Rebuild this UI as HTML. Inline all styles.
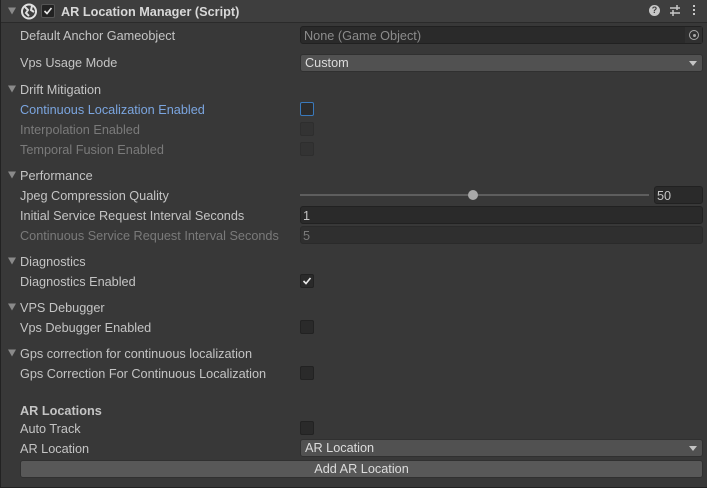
<!DOCTYPE html>
<html><head><style>
body{margin:0;width:707px;height:488px;background:#383838;font-family:"Liberation Sans",sans-serif;font-size:12.7px;color:#c4c4c4;position:relative;overflow:hidden}
.a{position:absolute;white-space:nowrap}
.l{left:20px;transform:translateY(-44%)}
.h{left:20px;transform:translateY(-44%)}
.tri{position:absolute;left:8px;width:0;height:0;border-left:4px solid transparent;border-right:4px solid transparent;border-top:7px solid #8a8a8a;transform:translateY(-50%)}
.dis{color:#7a7a7a}
.cb{position:absolute;left:300px;width:12px;height:12px;background:#2a2a2a;border:1px solid #222;border-radius:2px;transform:translateY(-50%)}
.cbd{background:#333;border-color:#2e2e2e}
.fld{position:absolute;left:300px;width:401px;height:17px;background:#2a2a2a;border:1px solid #212121;border-radius:3px;box-sizing:border-box}
.dd{position:absolute;left:300px;width:403px;height:18px;background:#515151;border:1px solid #303030;border-radius:3px;box-sizing:border-box;color:#dcdcdc;padding-left:4px;line-height:17px}
.dd:after{content:"";position:absolute;right:5px;top:6px;border-left:4px solid transparent;border-right:4px solid transparent;border-top:5px solid #c4c4c4}
</style></head><body>
<div class="a" style="left:0;top:0;width:707px;height:22px;background:#3e3e3e;border-bottom:1px solid #2a2a2a"></div>
<div class="a" style="left:0;top:0;width:1px;height:488px;background:#222"></div>
<div class="a" style="left:0;top:487px;width:707px;height:1px;background:#222"></div>
<div class="tri" style="top:11px"></div>
<svg class="a" style="left:20px;top:3px" width="18" height="17" viewBox="0 0 18 17"><circle cx="9" cy="8.5" r="7" fill="none" stroke="#e0e0e0" stroke-width="2"/><path d="M5 4 L8 7 L6 10 L9 13 M12 3 L11 7 L14 9" stroke="#e0e0e0" stroke-width="2" fill="none"/></svg>
<div class="a" style="left:41px;top:4px;width:12px;height:12px;background:#222;border:1px solid #555;border-radius:2px"></div>
<svg class="a" style="left:43px;top:6px" width="10" height="10"><path d="M1.5 5 L4 7.5 L8.5 2" stroke="#e8e8e8" stroke-width="1.6" fill="none"/></svg>
<div class="a" style="left:61px;top:11px;transform:translateY(-44%);font-weight:bold;color:#d8d8d8">AR Location Manager (Script)</div>
<div class="a" style="left:649px;top:5px;width:11px;height:11px;border-radius:50%;background:#c8c8c8;color:#3e3e3e;font-size:9px;font-weight:bold;text-align:center;line-height:11px">?</div>
<svg class="a" style="left:669px;top:4px" width="12" height="13"><path d="M1 4H11M1 9H11M8 1V6M4 6V12" stroke="#c8c8c8" stroke-width="1.5"/></svg>
<div class="a" style="left:693px;top:5px;width:2px;height:2px;background:#c8c8c8;box-shadow:0 4px #c8c8c8,0 8px #c8c8c8"></div>

<div class="a l" style="top:35px">Default Anchor Gameobject</div>
<div class="fld" style="top:26px;width:403px;height:18px"></div>
<div class="a" style="left:304px;top:35px;transform:translateY(-44%);color:#8c8c8c">None (Game Object)</div>
<div class="a" style="left:685px;top:27px;width:17px;height:16px;background:#303030"></div>
<div class="a" style="left:689px;top:30px;width:8px;height:8px;border:1.5px solid #aaa;border-radius:50%"></div>
<div class="a" style="left:692.5px;top:33.5px;width:3px;height:3px;background:#aaa;border-radius:50%"></div>

<div class="a l" style="top:62px">Vps Usage Mode</div>
<div class="dd" style="top:54px">Custom</div>

<div class="tri" style="top:89px"></div><div class="a h" style="top:89px">Drift Mitigation</div>
<div class="a l" style="top:109px;color:#7ba5df">Continuous Localization Enabled</div>
<div class="cb" style="top:109px;border-color:#3a79bb;background:#2c2c2c"></div>
<div class="a l dis" style="top:129px">Interpolation Enabled</div><div class="cb cbd" style="top:129px"></div>
<div class="a l dis" style="top:149px">Temporal Fusion Enabled</div><div class="cb cbd" style="top:149px"></div>

<div class="tri" style="top:175px"></div><div class="a h" style="top:175px">Performance</div>
<div class="a l" style="top:195px">Jpeg Compression Quality</div>
<div class="a" style="left:300px;top:194px;width:349px;height:2px;background:#5e5e5e"></div>
<div class="a" style="left:468px;top:190px;width:10px;height:10px;border-radius:50%;background:#a8a8a8"></div>
<div class="fld" style="left:654px;top:186px;width:49px;height:18px"></div>
<div class="a" style="left:657px;top:195px;transform:translateY(-44%)">50</div>
<div class="a l" style="top:215px">Initial Service Request Interval Seconds</div>
<div class="fld" style="top:206px;width:403px;height:18px"></div>
<div class="a" style="left:303px;top:215px;transform:translateY(-44%)">1</div>
<div class="a l dis" style="top:235px">Continuous Service Request Interval Seconds</div>
<div class="fld" style="top:226px;width:403px;height:18px;background:#2f2f2f;border-color:#2a2a2a"></div>
<div class="a dis" style="left:303px;top:235px;transform:translateY(-44%)">5</div>

<div class="tri" style="top:261px"></div><div class="a h" style="top:261px">Diagnostics</div>
<div class="a l" style="top:281px">Diagnostics Enabled</div><div class="cb" style="top:281px"></div>
<svg class="a" style="left:302px;top:276px" width="10" height="10"><path d="M1.5 5 L4 7.5 L8.5 2" stroke="#e8e8e8" stroke-width="1.6" fill="none"/></svg>

<div class="tri" style="top:307px"></div><div class="a h" style="top:307px">VPS Debugger</div>
<div class="a l" style="top:327px">Vps Debugger Enabled</div><div class="cb" style="top:327px"></div>

<div class="tri" style="top:353px"></div><div class="a h" style="top:353px">Gps correction for continuous localization</div>
<div class="a l" style="top:373px">Gps Correction For Continuous Localization</div><div class="cb" style="top:373px"></div>

<div class="a l" style="top:410px;font-weight:bold">AR Locations</div>
<div class="a l" style="top:428px">Auto Track</div><div class="cb" style="top:428px"></div>
<div class="a l" style="top:448px">AR Location</div>
<div class="dd" style="top:439px">AR Location</div>
<div class="a" style="left:20px;top:460px;width:683px;height:18px;background:#585858;border:1px solid #303030;border-radius:3px;box-sizing:border-box;text-align:center;line-height:17px;color:#dcdcdc">Add AR Location</div>
</body></html>
